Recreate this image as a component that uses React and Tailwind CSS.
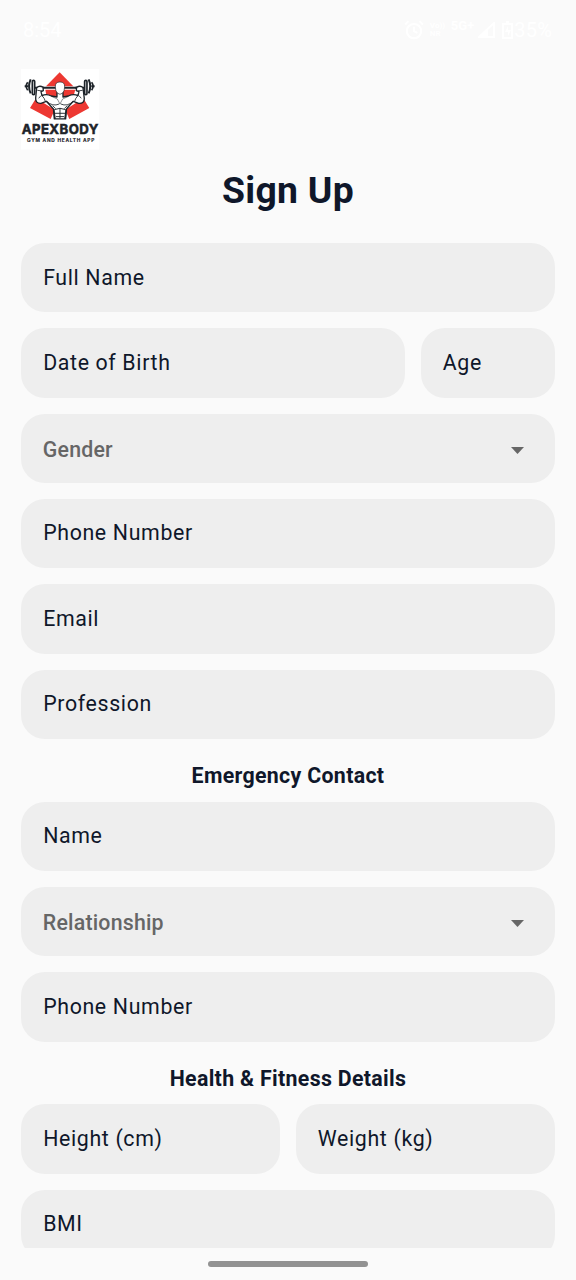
import React from 'react';

function StatusBar() {
  return (
    <header className="flex h-[69px] shrink-0 items-start justify-between pt-[18px] pr-[24px] pl-[23px] text-white">
      <span className="text-[20px] leading-6">8:54</span>
      <div className="flex h-6 items-center">
        <svg className="h-[20px] w-[20px]" viewBox="0 0 18 18" fill="none" stroke="currentColor" strokeWidth="1.8">
          <circle cx="9" cy="10" r="6.5" />
          <path d="M9 6v4l3 1.5M1 4l3-3M17 4l-3-3" />
        </svg>
        <span className="ml-[6px] w-[16px] text-[8px] leading-[8px] font-bold">Vo)) NR</span>
        <span className="mb-[8px] ml-[5px] text-[13px] leading-3 font-bold">5G+</span>
        <svg className="ml-[4px] h-[16px] w-[17px]" viewBox="0 0 17 16" fill="none" stroke="currentColor" strokeWidth="1.8">
          <path d="M1 15L16 1v14z" />
          <path d="M1 15L10 6.5V15z" fill="currentColor" stroke="none" />
        </svg>
        <svg className="ml-[7px] h-[18px] w-[11px]" viewBox="0 0 11 18" fill="none" stroke="currentColor" strokeWidth="1.8">
          <path d="M1 3h9v14H1zM4 1h3" />
          <path d="M6 5L3 11h3v4l3-6H6z" fill="currentColor" stroke="none" />
        </svg>
        <span className="ml-px text-[20px] leading-6 tracking-[0.2px]">35%</span>
      </div>
    </header>
  );
}

function Weights() {
  return (
    <g stroke="#1d2329" fill="#fff">
      <path d="M46 80H56M76 84H104" strokeWidth="6" />
      <path d="M55 68Q46 80 55 92" fill="none" strokeWidth="5" />
      <path d="M64 59Q54 80 64 101" fill="none" strokeWidth="6" />
      <rect x="69" y="62" width="7" height="43" rx="3.5" strokeWidth="5" />
    </g>
  );
}

function Logo() {
  return (
    <svg className="h-[80.6px] w-[78.3px] shrink-0" viewBox="35 28 235 242" role="img" aria-label="ApexBody">
      <rect x="35" y="28" width="235" height="242" fill="#fff" />
      <path d="M151 38L192 80H110z" fill="#ed3832" />
      <path d="M80 116L62 145L124 178L136 150zM222 116L240 145L180 178L168 150z" fill="#ed3832" />
      <path d="M108 90H198L192 112H112z" fill="#ed3832" />
      <Weights />
      <g transform="translate(302 0) scale(-1 1)">
        <Weights />
      </g>
      <path d="M98 84H207" stroke="#1d2329" strokeWidth="6" />
      <path
        d="M82 84Q91 76 101 83L102 93L95 96L98 108Q111 101 126 109L143 112V99H161V112L177 109Q193 101 206 108L209 96L201 93L202 83Q213 76 221 84L225 116Q226 132 208 131L192 125L181 137L171 149L169 178H135L133 149L122 137L111 125L95 131Q78 132 79 115z"
        fill="#fff"
        stroke="#1d2329"
        strokeWidth="4"
        strokeLinejoin="round"
      />
      <path d="M138 82Q137 67 152 67Q167 67 166 82Q166 95 159 101Q152 107 145 101Q138 95 138 82z" fill="#fff" stroke="#1d2329" strokeWidth="2" />
      <path
        d="M84 92L99 94M205 94L220 92M95 108L88 116M209 108L216 116M98 108Q106 116 108 125M206 108Q198 116 196 125M112 125Q130 142 150 133M192 125Q174 142 154 133M130 138L139 147M174 138L165 147"
        fill="none"
        stroke="#1d2329"
        strokeWidth="2.5"
      />
      <path d="M126 110L144 118L152 133L160 118L178 110" fill="none" stroke="#1d2329" strokeWidth="1.5" />
      <path d="M135 150L152 146L169 150M136 161H168M140 171H164M152 146V176" fill="none" stroke="#1d2329" strokeWidth="2.8" />
      <path d="M133 151L137 178M171 151L167 178" stroke="#1d2329" strokeWidth="5" />
      <text x="37" y="222" textLength="230" fontSize="39.5" fontWeight="700" fill="#1d2329" stroke="#1d2329" strokeWidth="1.6" className="font-[Inter,sans-serif]">
        APEXBODY
      </text>
      <text x="53" y="248" textLength="202" fontSize="14.5" fontWeight="700" fill="#1d2329" stroke="#1d2329" strokeWidth="0.4" className="font-[Inter,sans-serif]">
        GYM AND HEALTH APP
      </text>
    </svg>
  );
}

function Field({ label, className = 'w-full' }) {
  return (
    <div className={`flex h-[69.333px] shrink-0 items-center rounded-[24px] bg-[#eeeeee] pb-[0.3px] pl-[21.8px] text-[21.333px] tracking-[0.65px] text-[#0f172a] ${className}`}>
      {label}
    </div>
  );
}

function Select({ label }) {
  return (
    <div className="flex h-[69.333px] shrink-0 items-center justify-between rounded-[24px] bg-[#eeeeee] pt-[3.6px] pr-[31px] pl-[21.5px] text-[21.333px] font-medium tracking-[0.2px] text-[#666666]">
      <span>{label}</span>
      <svg className="h-[7px] w-[13px]" viewBox="0 0 13 7" fill="currentColor">
        <path d="M0 0h13L6.5 7z" />
      </svg>
    </div>
  );
}

function SectionTitle({ children }) {
  return (
    <h2 className="-my-[16px] flex h-[62.7px] shrink-0 items-center justify-center pt-[11.4px] text-[21.333px] font-bold tracking-[0.32px] text-[#0f172a]">
      {children}
    </h2>
  );
}

export default function App() {
  return (
    <div className="flex h-[1280px] w-[576px] flex-col overflow-hidden bg-[#fafafa] font-[Roboto,sans-serif]">
      <StatusBar />
      <main className="flex min-h-0 flex-1 flex-col overflow-hidden px-[21.333px]">
        <Logo />
        <h1 className="flex h-[93.4px] shrink-0 justify-center pt-[17px] text-[37.333px] leading-[46px] font-bold tracking-[0.3px] text-[#0f172a]">Sign Up</h1>
        <div className="flex flex-col gap-4">
          <Field label="Full Name" />
          <div className="flex gap-4">
            <Field label="Date of Birth" className="flex-1" />
            <Field label="Age" className="w-[133.7px]" />
          </div>
          <Select label="Gender" />
          <Field label="Phone Number" />
          <Field label="Email" />
          <Field label="Profession" />
          <SectionTitle>Emergency Contact</SectionTitle>
          <Field label="Name" />
          <Select label="Relationship" />
          <Field label="Phone Number" />
          <SectionTitle>Health &amp; Fitness Details</SectionTitle>
          <div className="flex gap-4">
            <Field label="Height (cm)" className="flex-1" />
            <Field label="Weight (kg)" className="flex-1" />
          </div>
          <Field label="BMI" />
        </div>
      </main>
      <footer className="flex h-8 shrink-0 items-center justify-center">
        <div className="h-[6px] w-[160px] rounded-full bg-[#929292]" />
      </footer>
    </div>
  );
}
